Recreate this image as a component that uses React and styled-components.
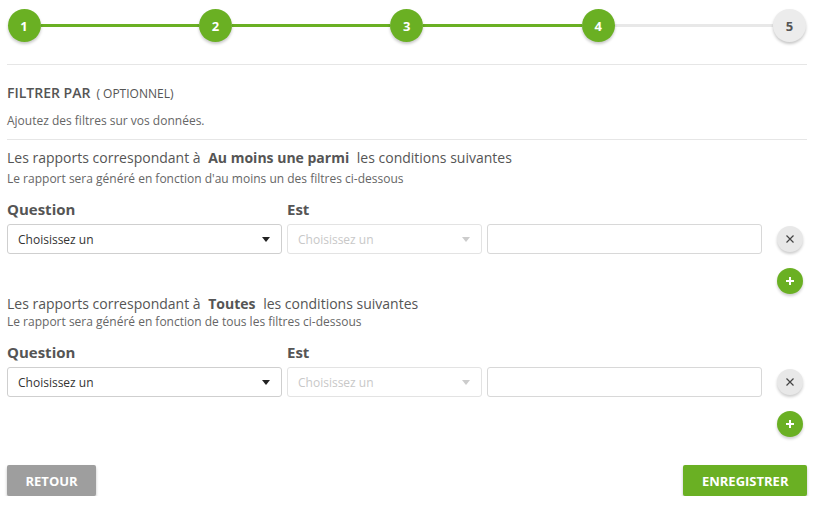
import React from "react";
import styled, { createGlobalStyle } from "styled-components";

const GREEN = "#6ab023";

const Global = createGlobalStyle`
  body {
    margin: 0;
    background: #fff;
    font-family: "Open Sans", "Liberation Sans", sans-serif;
    color: #555;
  }
`;

const Page = styled.div`
  width: 815px;
  padding: 9px 8px 0 7px;
  box-sizing: border-box;
`;

const Stepper = styled.div`
  display: flex;
  align-items: center;
  padding: 0 1px 0 0.5px;
`;

const Step = styled.div`
  width: 33px;
  height: 33px;
  border-radius: 50%;
  flex: none;
  display: flex;
  align-items: center;
  justify-content: center;
  font-size: 13px;
  font-weight: 700;
  background: ${(p) => (p.done ? GREEN : "#ececec")};
  color: ${(p) => (p.done ? "#fff" : "#555")};
  box-shadow: 0 2px 3px rgba(0, 0, 0, 0.22);
  position: relative;
  z-index: 1;
`;

const StepLine = styled.div`
  flex: 1;
  height: 3px;
  background: ${(p) => (p.done ? GREEN : "#e8e8e8")};
`;

const Divider = styled.hr`
  border: none;
  border-top: 1px solid #e6e6e6;
  margin: ${(p) => p.m || "0"};
`;

const Intro = styled.div`
  margin-top: 19px;
`;

const Title = styled.div`
  font-size: 14px;
  font-weight: 600;
  color: #555;
  line-height: 18px;
  span {
    font-weight: 400;
    font-size: 12px;
    margin-left: 6px;
  }
`;

const Hint = styled.div`
  font-size: 12px;
  color: #666;
  line-height: 16px;
  margin-top: 10px;
`;

const Section = styled.div`
  margin-top: ${(p) => p.top}px;
`;

const Lead = styled.div`
  font-size: 14px;
  line-height: 20px;
  color: #555;
  b {
    font-weight: 700;
    margin: 0 4px;
  }
`;

const Sub = styled.div`
  font-size: 12px;
  line-height: 16px;
  color: #666;
  margin-top: ${(p) => p.top}px;
`;

const Labels = styled.div`
  display: grid;
  grid-template-columns: 275px 195px;
  column-gap: 5px;
  margin-top: 13px;
  font-size: 15px;
  font-weight: 700;
  color: #555;
  line-height: 18px;
`;

const Row = styled.div`
  display: grid;
  grid-template-columns: 275px 195px 275px 40px;
  column-gap: 5px;
  margin-top: 6px;
  align-items: center;
`;

const Select = styled.div`
  height: 30px;
  box-sizing: border-box;
  border: 1px solid ${(p) => (p.disabled ? "#e3e3e3" : "#cfcfcf")};
  border-radius: 3px;
  display: flex;
  align-items: center;
  justify-content: space-between;
  padding: 0 10px;
  font-size: 12px;
  color: ${(p) => (p.disabled ? "#c8c8c8" : "#333")};
  background: #fff;
`;

const Caret = styled.span`
  width: 0;
  height: 0;
  border-left: 4.5px solid transparent;
  border-right: 4.5px solid transparent;
  border-top: 5px solid ${(p) => (p.disabled ? "#ccc" : "#222")};
  margin-right: 1px;
`;

const Input = styled.div`
  height: 30px;
  box-sizing: border-box;
  border: 1px solid #d8d8d8;
  border-radius: 3px;
`;

const Round = styled.div`
  width: 26px;
  height: 26px;
  border-radius: 50%;
  display: flex;
  align-items: center;
  justify-content: center;
  background: ${(p) => (p.add ? GREEN : "#e8e8e8")};
  box-shadow: 0 2px 3px rgba(0, 0, 0, 0.2);
  margin-left: ${(p) => (p.add ? "0" : "10px")};
`;

const AddRow = styled.div`
  display: flex;
  justify-content: flex-end;
  padding-right: 4px;
  margin-top: 14px;
`;

const Footer = styled.div`
  display: flex;
  justify-content: space-between;
  margin-top: ${(p) => p.top}px;
`;

const Button = styled.button`
  height: 31px;
  border: none;
  border-radius: 2px;
  padding: 0 ${(p) => p.pad}px;
  background: ${(p) => (p.primary ? GREEN : "#9e9e9e")};
  color: #fff;
  font-family: "Open Sans", sans-serif;
  font-weight: 700;
  font-size: 13px;
  box-shadow: 0 2px 3px rgba(0, 0, 0, 0.25);
`;

const XIcon = () => (
  <svg width="10" height="10" viewBox="0 0 10 10">
    <path d="M1.5 1.5 L8.5 8.5 M8.5 1.5 L1.5 8.5" stroke="#444" strokeWidth="1.2" />
  </svg>
);

const PlusIcon = () => (
  <svg width="10" height="10" viewBox="0 0 10 10">
    <path d="M5 1 V9 M1 5 H9" stroke="#fff" strokeWidth="2" />
  </svg>
);

function FilterBlock({ top, subTop, mode, sub }) {
  return (
    <Section top={top}>
      <Lead>
        Les rapports correspondant à <b>{mode}</b> les conditions suivantes
      </Lead>
      <Sub top={subTop}>{sub}</Sub>
      <Labels>
        <div>Question</div>
        <div>Est</div>
      </Labels>
      <Row>
        <Select>
          Choisissez un
          <Caret />
        </Select>
        <Select disabled>
          Choisissez un
          <Caret disabled />
        </Select>
        <Input />
        <Round>
          <XIcon />
        </Round>
      </Row>
      <AddRow>
        <Round add>
          <PlusIcon />
        </Round>
      </AddRow>
    </Section>
  );
}

export default function App() {
  const steps = [1, 2, 3, 4, 5];
  return (
    <Page>
      <Global />
      <Stepper>
        {steps.map((n, i) => (
          <React.Fragment key={n}>
            {i > 0 && <StepLine done={n <= 4} />}
            <Step done={n <= 4}>{n}</Step>
          </React.Fragment>
        ))}
      </Stepper>
      <Divider m="22px 0 0" />
      <Intro>
        <Title>
          FILTRER PAR<span>( OPTIONNEL)</span>
        </Title>
        <Hint>Ajoutez des filtres sur vos données.</Hint>
      </Intro>
      <Divider m="10px 0 0" />
      <FilterBlock
        top={8}
        subTop={3}
        mode="Au moins une parmi"
        sub="Le rapport sera généré en fonction d'au moins un des filtres ci-dessous"
      />
      <FilterBlock
        top={0}
        subTop={0}
        mode="Toutes"
        sub="Le rapport sera généré en fonction de tous les filtres ci-dessous"
      />
      <Footer top={28}>
        <Button pad={18.5}>RETOUR</Button>
        <Button primary pad={18.5}>ENREGISTRER</Button>
      </Footer>
    </Page>
  );
}
